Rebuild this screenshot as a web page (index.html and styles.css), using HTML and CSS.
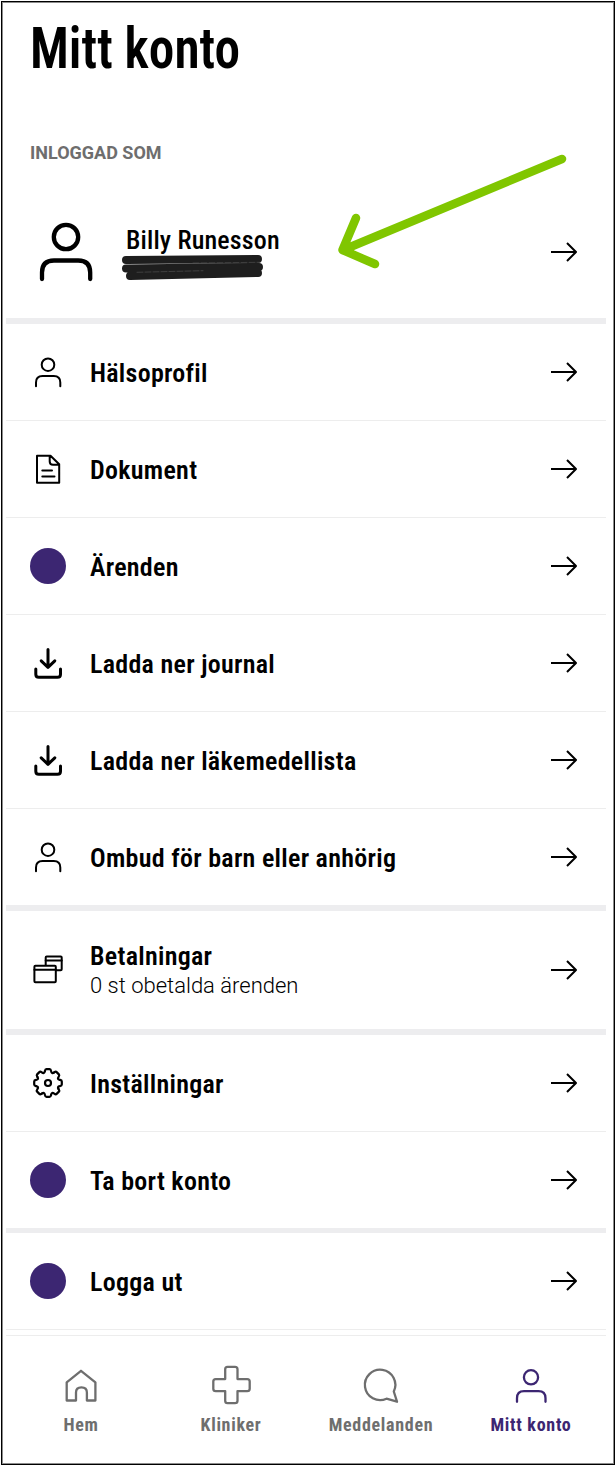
FILE: index.html
```
<!DOCTYPE html>
<html lang="sv">
<head>
    <meta charset="UTF-8">
    <meta name="viewport" content="width=device-width, initial-scale=1.0">
    <title>Mitt konto</title>
    <link rel="stylesheet" href="styles.css">
</head>
<body>
    <svg class="sprite" width="0" height="0">
        <symbol id="arrow" viewBox="0 0 28 24"><path d="M1 12H26M17 3L26 12L17 21"/></symbol>
        <symbol id="user" viewBox="0 0 36 36"><circle cx="18" cy="10.7" r="6.3"/><path d="M6 32.3V28.5Q6 22 12.5 22H23.8Q30.3 22 30.3 28.5V32.3"/></symbol>
        <symbol id="download" viewBox="0 0 36 36"><path d="M18 4.5V22M11.2 15.800L18 22.3L24.8 15.800M5.8 24V29.2Q5.8 32.2 8.8 32.2H27.5Q30.5 32.2 30.5 29.2V24"/></symbol>
    </svg>

    <div class="app">
        <header class="header">
            <h1 class="title">Mitt konto</h1>
            <h2 class="section-label">INLOGGAD SOM</h2>
        </header>

        <main class="content">
            <a class="profile">
                <svg class="avatar" viewBox="0 0 60 64"><circle cx="30" cy="17" r="12.2"/><path d="M6 59V52.5Q6 40.5 18 40.5H42.2Q54.2 40.5 54.2 52.5V59"/></svg>
                <span class="profile-name">Billy Runesson</span>
                <svg class="arrow"><use href="#arrow"/></svg>
                <svg class="scribble" viewBox="0 0 150 30">
                    <path d="M7 7L139 6M7 15.5L140 14M11 23L139 20"/>
                    <path class="scratch" d="M74 10L141 9.3M18 19.3L84 17.7"/>
                </svg>
                <svg class="pointer" viewBox="0 0 240 124"><path d="M228 9L9 100M22 68L8.5 100L41 114"/></svg>
            </a>

            <section class="group">
                <a class="row">
                    <svg class="icon"><use href="#user"/></svg>
                    <span class="label">Hälsoprofil</span>
                    <svg class="arrow"><use href="#arrow"/></svg>
                </a>
                <a class="row">
                    <svg class="icon" viewBox="0 0 36 36"><path d="M7 4.7H20.5L29.2 13.3V31.7H7ZM19.7 4.7V10.5Q19.7 13.7 23 13.7H29M12.3 19.4H22M12.3 25.4H24.5"/></svg>
                    <span class="label">Dokument</span>
                    <svg class="arrow"><use href="#arrow"/></svg>
                </a>
                <a class="row">
                    <span class="dot"></span>
                    <span class="label">Ärenden</span>
                    <svg class="arrow"><use href="#arrow"/></svg>
                </a>
                <a class="row">
                    <svg class="icon bold"><use href="#download"/></svg>
                    <span class="label">Ladda ner journal</span>
                    <svg class="arrow"><use href="#arrow"/></svg>
                </a>
                <a class="row">
                    <svg class="icon bold"><use href="#download"/></svg>
                    <span class="label">Ladda ner läkemedellista</span>
                    <svg class="arrow"><use href="#arrow"/></svg>
                </a>
                <a class="row">
                    <svg class="icon"><use href="#user"/></svg>
                    <span class="label">Ombud för barn eller anhörig</span>
                    <svg class="arrow"><use href="#arrow"/></svg>
                </a>
            </section>

            <section class="group">
                <a class="row row-tall">
                    <svg class="icon" viewBox="0 0 36 36">
                        <rect x="15.7" y="4.5" width="16" height="13.7" rx="1"/><path d="M15.7 8.6H31.7"/>
                        <rect class="front" x="4.4" y="13.8" width="21.4" height="16.5" rx="1"/><path d="M4.4 17.7H25.8"/>
                    </svg>
                    <span class="label">
                        Betalningar
                        <span class="sub">0 st obetalda ärenden</span>
                    </span>
                    <svg class="arrow"><use href="#arrow"/></svg>
                </a>
            </section>

            <section class="group">
                <a class="row">
                    <svg class="icon gear" viewBox="-18 -18 36 36">
                        <path id="tooth" d="M-3.1-11.9Q-2.8-13.8-1.6-13.8H1.6Q2.8-13.8 3.1-11.9Q3.6-8.8 6.2-10.6"/>
                        <use href="#tooth" transform="rotate(45)"/>
                        <use href="#tooth" transform="rotate(90)"/>
                        <use href="#tooth" transform="rotate(135)"/>
                        <use href="#tooth" transform="rotate(180)"/>
                        <use href="#tooth" transform="rotate(225)"/>
                        <use href="#tooth" transform="rotate(270)"/>
                        <use href="#tooth" transform="rotate(315)"/>
                        <circle r="3"/>
                    </svg>
                    <span class="label">Inställningar</span>
                    <svg class="arrow"><use href="#arrow"/></svg>
                </a>
                <a class="row">
                    <span class="dot"></span>
                    <span class="label">Ta bort konto</span>
                    <svg class="arrow"><use href="#arrow"/></svg>
                </a>
            </section>

            <section class="group group-last">
                <a class="row">
                    <span class="dot"></span>
                    <span class="label">Logga ut</span>
                    <svg class="arrow"><use href="#arrow"/></svg>
                </a>
            </section>
        </main>

        <nav class="tabs">
            <a class="tab">
                <svg class="tab-icon" viewBox="0 0 40 40"><path d="M20 5.8L34.4 17.3V35.5H25.9V27.5Q25.9 22.3 20.4 22.3Q15 22.3 15 27.5V35.5H5.7V17.3Z"/></svg>
                Hem
            </a>
            <a class="tab">
                <svg class="tab-icon" viewBox="0 0 40 40"><path d="M16.5 1.8H24Q26.5 1.8 26.5 4.3V14.1H36.2Q38.7 14.1 38.7 16.5V23.7Q38.7 26.1 36.2 26.1H26.5V35.8Q26.5 38.2 24 38.2H16.5Q14.2 38.2 14.2 35.8V26.1H4.7Q2.3 26.1 2.3 23.7V16.5Q2.3 14.1 4.7 14.1H14.2V4.3Q14.2 1.8 16.5 1.8Z"/></svg>
                Kliniker
            </a>
            <a class="tab">
                <svg class="tab-icon" viewBox="0 0 40 40"><path d="M32.8 26.5A15.2 15.2 0 1 0 25.5 33.7L36 36.7Z"/></svg>
                Meddelanden
            </a>
            <a class="tab active">
                <svg class="tab-icon" viewBox="0 0 40 40"><circle cx="20" cy="12.3" r="7.1"/><path d="M6 36.8V33.3Q6 26.2 13 26.2H27.5Q34.5 26.2 34.5 33.3V36.8"/></svg>
                Mitt konto
            </a>
        </nav>
    </div>
</body>
</html>
```

FILE: styles.css
```
* {
    box-sizing: border-box;
}

body {
    margin: 0;
    padding: 1px;
    background: #fff;
    color: #000;
    font-family: Roboto, "Liberation Sans", sans-serif;
    font-stretch: 75%;
}

.sprite {
    display: block;
    position: absolute;
}

svg {
    fill: none;
    stroke: currentColor;
    stroke-width: 2;
    stroke-linecap: round;
    stroke-linejoin: round;
    flex-shrink: 0;
}

.app {
    width: 614px;
    height: 1464px;
    border: 1px solid #000;
    box-shadow: inset 0 0 0 1px #8c8c8c;
    padding: 0 8px 0 4px;
}

.header {
    height: 184px;
    padding: 11px 24px 0;
}

.title {
    margin: 0;
    font-size: 58px;
    font-weight: 600;
    line-height: 70px;
    transform: scaleX(0.885);
    transform-origin: left;
}

.section-label {
    margin: 59px 0 0;
    color: #6e6e6e;
    font-size: 18px;
    font-stretch: normal;
    font-weight: 700;
    line-height: 22px;
}

.profile {
    position: relative;
    display: flex;
    align-items: center;
    height: 138px;
    padding: 0 28px 0 30px;
    border-bottom: 6px solid #ededef;
}

.avatar {
    width: 60px;
    height: 64px;
    stroke-width: 4.3;
}

.profile-name {
    flex: 1;
    margin: -24px 0 0 30px;
    font-size: 26px;
    font-weight: 500;
    letter-spacing: 0.15px;
    line-height: 30px;
}

.scribble {
    position: absolute;
    left: 113px;
    top: 67px;
    width: 150px;
    height: 30px;
    color: #1e1e1e;
    stroke-width: 8;
}

.scratch {
    stroke: #555;
    stroke-width: 0.6;
    stroke-dasharray: 6 2;
}

.pointer {
    position: absolute;
    left: 328px;
    top: -36px;
    width: 240px;
    height: 124px;
    color: #80c600;
    stroke-width: 8.5;
}

.arrow {
    width: 28px;
    height: 24px;
    stroke-linecap: butt;
}

.group {
    border-bottom: 6px solid #ededef;
}

.group:nth-of-type(3) {
    border-bottom-width: 5px;
}

.group-last {
    border-bottom: 1px solid #ededed;
    margin-bottom: 5px;
}

.row {
    display: flex;
    align-items: center;
    height: 96px;
    padding: 0 28px 0 24px;
}

.row + .row {
    height: 97px;
    border-top: 1px solid #ededed;
}

.row-tall {
    height: 118px;
}

.icon,
.dot {
    width: 36px;
    height: 36px;
}

.icon.bold {
    stroke-width: 3;
}

.gear {
    stroke-width: 2.2;
}

.front {
    fill: #fff;
}

.dot {
    border-radius: 50%;
    background: #3c2672;
}

.label {
    display: flex;
    flex-direction: column;
    flex: 1;
    margin-left: 24px;
    padding-top: 2px;
    font-size: 26px;
    font-weight: 600;
    letter-spacing: 0.28px;
    line-height: 30px;
}

.sub {
    font-size: 22px;
    font-stretch: normal;
    font-weight: 300;
    letter-spacing: 0;
}

.tabs {
    display: flex;
    border-top: 1px solid #ededed;
    padding-top: 29px;
}

.tab {
    display: flex;
    flex: 1;
    flex-direction: column;
    align-items: center;
    color: #6e6e6e;
    font-size: 18px;
    font-weight: 700;
    letter-spacing: 0.7px;
    line-height: 20px;
}

.tab-icon {
    width: 40px;
    height: 40px;
    margin-bottom: 10px;
    stroke-width: 2.3;
}

.active {
    color: #3c2672;
}
```
